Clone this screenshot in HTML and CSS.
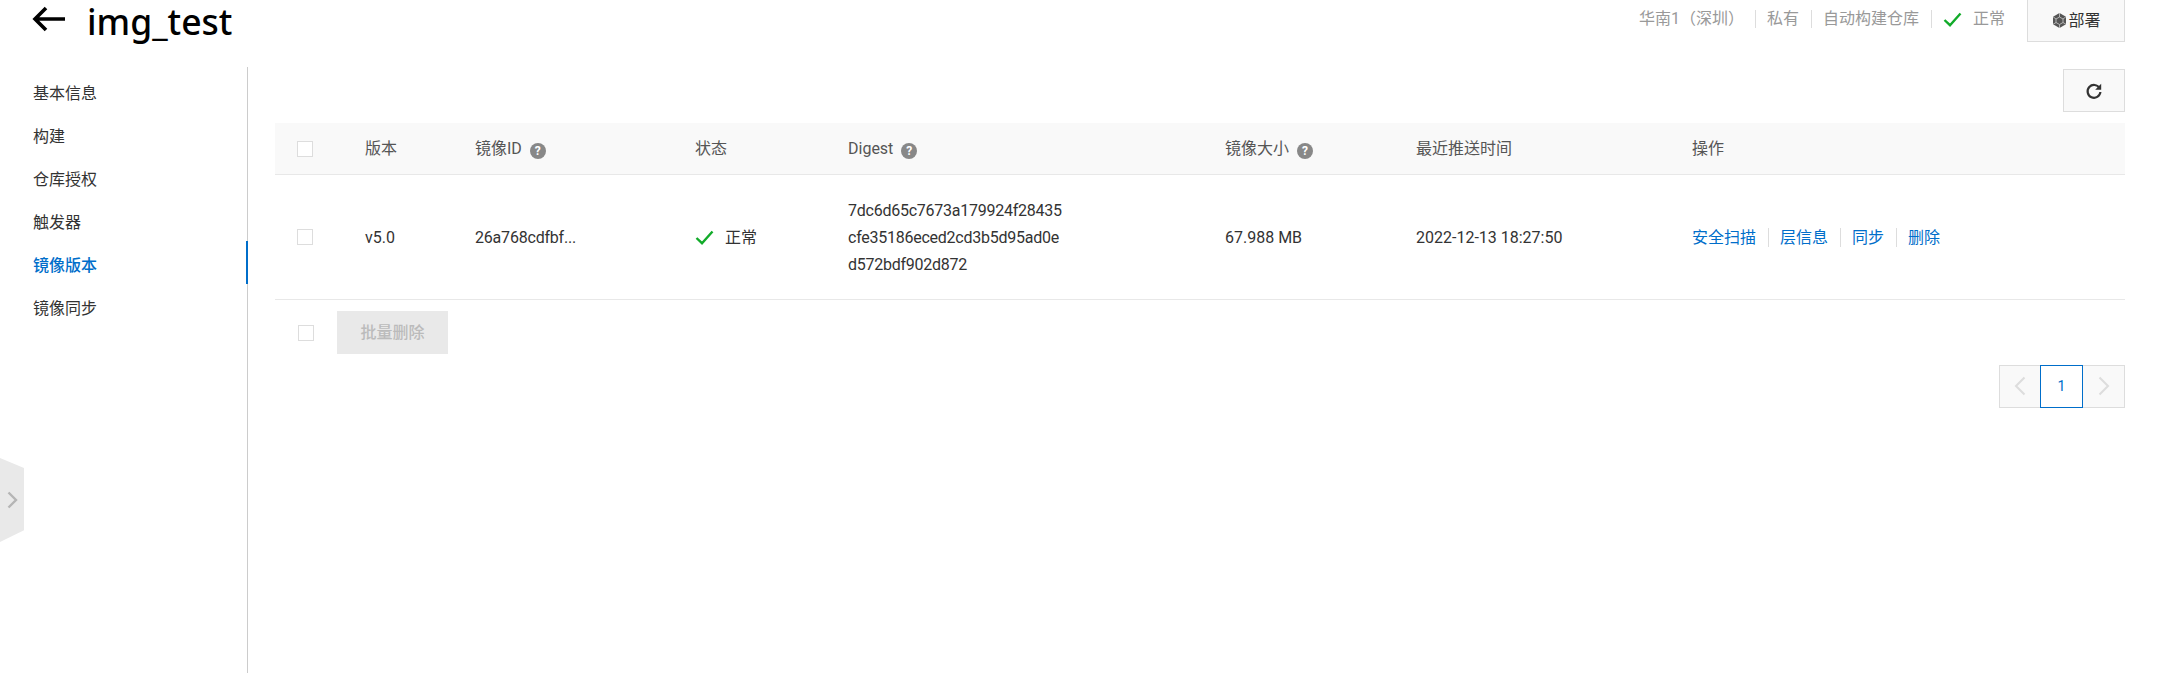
FILE: index.html
```html
<!DOCTYPE html>
<html lang="zh-CN">
<head>
<meta charset="utf-8">
<title>img_test</title>
<link rel="stylesheet" href="styles.css">
</head>
<body>
<header class="topbar">
  <div class="title-group">
    <svg class="back-icon" width="34" height="26" viewBox="0 0 34 26"><path d="M33 13H3M14 2 3 13l11 11" fill="none" stroke="#000" stroke-width="3.600"/></svg>
    <h1 class="title">img_test</h1>
  </div>
  <div class="meta">
    <span class="meta-item meta-region">华南1（深圳）</span>
    <span class="meta-item meta-sep">私有</span>
    <span class="meta-item meta-sep">自动构建仓库</span>
    <span class="meta-status meta-sep">
      <svg class="check" width="19" height="15" viewBox="0 0 19 15"><path d="M1.5 8 7 13.2 17.500 1.500" fill="none" stroke="#12ab2a" stroke-width="2.400"/></svg>
      <span>正常</span>
    </span>
    <button class="deploy-btn" type="button">
      <svg width="17" height="17" viewBox="0 0 17 17"><path d="M8.5 1 15 4.7v7.6L8.5 16 2 12.3V4.7z" fill="#555"/><path d="M8.5 5 12 7v3.5L8.5 12.5 5 10.5V7zM8.5 1v4M2 4.7 5 7M15 4.7 12 7M2 12.3l3-1.8M15 12.3l-3-1.8M8.5 16v-3.5" fill="none" stroke="#ccc" stroke-width=".8"/></svg>
      <span>部署</span>
    </button>
  </div>
</header>

<div class="layout">
  <nav class="sidenav">
    <a class="nav-item">基本信息</a>
    <a class="nav-item">构建</a>
    <a class="nav-item">仓库授权</a>
    <a class="nav-item">触发器</a>
    <a class="nav-item nav-active">镜像版本</a>
    <a class="nav-item">镜像同步</a>
  </nav>

  <main class="content">
    <div class="toolbar">
      <button class="refresh-btn" type="button" aria-label="刷新">
        <svg width="18" height="18" viewBox="0 0 18 18"><path d="M14.6 6.2A6.4 6.4 0 1 0 15.4 10" fill="none" stroke="#333" stroke-width="2.200"/><path d="M16.2 1.8v6h-6z" fill="#333"/></svg>
      </button>
    </div>

    <table class="grid">
      <colgroup>
        <col class="c-check"><col class="c-ver"><col class="c-id"><col class="c-state"><col class="c-digest"><col class="c-size"><col class="c-time"><col>
      </colgroup>
      <thead>
        <tr>
          <th><span class="checkbox"></span></th>
          <th>版本</th>
          <th>镜像ID <span class="help">?</span></th>
          <th>状态</th>
          <th>Digest <span class="help">?</span></th>
          <th>镜像大小 <span class="help">?</span></th>
          <th>最近推送时间</th>
          <th>操作</th>
        </tr>
      </thead>
      <tbody>
        <tr>
          <td><span class="checkbox"></span></td>
          <td>v5.0</td>
          <td class="image-id">26a768cdfbf...</td>
          <td>
            <span class="state">
              <svg width="19" height="15" viewBox="0 0 19 15"><path d="M1.5 8 7 13.2 17.500 1.500" fill="none" stroke="#12ab2a" stroke-width="2.400"/></svg>
              <span>正常</span>
            </span>
          </td>
          <td class="digest">7dc6d65c7673a179924f28435<br>cfe35186eced2cd3b5d95ad0e<br>d572bdf902d872</td>
          <td>67.988 MB</td>
          <td>2022-12-13 18:27:50</td>
          <td class="actions"><a>安全扫描</a><a>层信息</a><a>同步</a><a>删除</a></td>
        </tr>
      </tbody>
    </table>

    <div class="batch">
      <span class="checkbox"></span>
      <button class="batch-btn" type="button" disabled>批量删除</button>
    </div>

    <div class="pager">
      <button class="page-btn" type="button" aria-label="上一页"><svg width="12" height="20" viewBox="0 0 12 20"><path d="M10.5 1.5 2 10l8.5 8.5" fill="none" stroke="#ddd" stroke-width="2"/></svg></button>
      <button class="page-btn page-current" type="button">1</button>
      <button class="page-btn" type="button" aria-label="下一页"><svg width="12" height="20" viewBox="0 0 12 20"><path d="M1.5 1.5 10 10l-8.5 8.5" fill="none" stroke="#ddd" stroke-width="2"/></svg></button>
    </div>
  </main>
</div>

<div class="side-toggle">
  <svg width="11" height="18" viewBox="0 0 11 18"><path d="M1.5 1.5 9 9l-7.500 7.500" fill="none" stroke="#b5b5b5" stroke-width="2.400"/></svg>
</div>
</body>
</html>
```
FILE: styles.css
```css
* { box-sizing: border-box; }
html, body { height: 100%; }
body {
  margin: 0;
  overflow: hidden;
  background: #fff;
  color: #333;
  font: 16px/20px Roboto, "Noto Sans CJK SC", sans-serif;
}
button { font: inherit; cursor: pointer; }

.topbar {
  height: 67px;
  display: flex;
  justify-content: space-between;
  align-items: flex-start;
  padding: 0 32px;
}
.title-group { display: flex; align-items: center; height: 42px; }
.back-icon { margin-right: 21px; margin-top: -4px; }
.title {
  margin: 0;
  font-family: "Noto Sans", sans-serif;
  font-size: 35.5px;
  line-height: 42px;
  font-weight: 500;
  color: #000;
}
.meta { display: flex; align-items: center; height: 42px; color: #999; padding-bottom: 4px; }
.meta-item, .meta-status { white-space: nowrap; }
.meta-region { margin-right: 11px; }
.meta-sep {
  border-left: 1px solid #ddd;
  padding-left: 11px;
  margin-right: 12px;
  line-height: 18px;
}
.meta-status { display: flex; align-items: center; gap: 11px; margin-right: 22px; }
.deploy-btn {
  width: 98px;
  height: 42px;
  margin-bottom: -4px;
  border: 1px solid #ddd;
  border-top: 0;
  background: #f9f9f9;
  color: #333;
  display: flex;
  align-items: center;
  justify-content: center;
  padding: 0;
}

.layout { display: flex; height: 606px; }
.sidenav {
  width: 248px;
  flex: none;
  border-right: 1px solid #ccc;
  padding-top: 2px;
  display: flex;
  flex-direction: column;
}
.nav-item {
  height: 43px;
  line-height: 50px;
  padding-left: 33px;
  color: #333;
  margin-right: -1px;
}
.nav-active {
  color: #006eca;
  font-weight: 500;
  border-right: 2px solid #006eca;
}

.content { flex: 1; min-width: 0; padding: 2px 32px 0 27px; }
.toolbar { display: flex; justify-content: flex-end; height: 54px; }
.refresh-btn {
  width: 62px;
  height: 43px;
  border: 1px solid #ddd;
  background: #f9f9f9;
  padding: 0;
  display: flex;
  align-items: center;
  justify-content: center;
}

.grid { width: 100%; border-collapse: collapse; table-layout: fixed; }
.c-check { width: 90px; }
.c-ver { width: 110px; }
.c-id { width: 220px; }
.c-state { width: 153px; }
.c-digest { width: 377px; }
.c-size { width: 191px; }
.c-time { width: 276px; }
.grid th {
  height: 51px;
  padding: 2px 0 0;
  text-align: left;
  font-weight: 400;
  color: #555;
  background: #f9f9f9;
  border-bottom: 1px solid #e8e8e8;
}
.grid td {
  height: 125px;
  padding: 2px 0 0;
  color: #333;
  border-bottom: 1px solid #e8e8e8;
}
.grid th:first-child, .grid td:first-child { padding: 0 0 0 22px; }
.checkbox {
  display: inline-block;
  width: 16px;
  height: 16px;
  vertical-align: middle;
  border: 1px solid #ddd;
  background: #fff;
}
.help {
  display: inline-block;
  width: 16px;
  height: 16px;
  margin-left: 4px;
  border-radius: 50%;
  background: #888;
  color: #fff;
  font-size: 12px;
  line-height: 16px;
  font-weight: 700;
  text-align: center;
  vertical-align: -1px;
}
.state { display: flex; align-items: center; gap: 11px; }
.image-id { letter-spacing: -0.2px; }
.digest { line-height: 27px; letter-spacing: -0.25px; }
.actions a { color: #006eca; }
.actions a + a {
  border-left: 1px solid #ddd;
  margin-left: 11.5px;
  padding-left: 11.5px;
}

.batch { display: flex; align-items: center; height: 43px; margin-top: 11px; padding-left: 23px; gap: 23px; }
.batch .checkbox { margin-top: 2px; }
.batch-btn {
  width: 111px;
  height: 43px;
  border: 0;
  padding: 2px 0 0;
  background: #e9e9e9;
  color: #bbb;
  font-weight: 500;
}

.pager { display: flex; justify-content: flex-end; margin-top: 11px; }
.page-btn {
  width: 42px;
  height: 43px;
  border: 1px solid #ddd;
  background: #f9f9f9;
  padding: 0;
  display: flex;
  align-items: center;
  justify-content: center;
}
.page-btn + .page-btn { margin-left: -1px; }
.page-btn:last-child { width: 43px; }
.page-current {
  width: 43px;
  background: #fff;
  border-color: #006eca;
  color: #006eca;
  position: relative;
  font-size: 14px;
}

.side-toggle {
  position: absolute;
  left: 0;
  top: 458px;
  width: 24px;
  height: 84px;
  background: #e9e9e9;
  clip-path: polygon(0 0, 100% 12%, 100% 86%, 0 100%);
  display: flex;
  align-items: center;
  justify-content: center;
}
```
